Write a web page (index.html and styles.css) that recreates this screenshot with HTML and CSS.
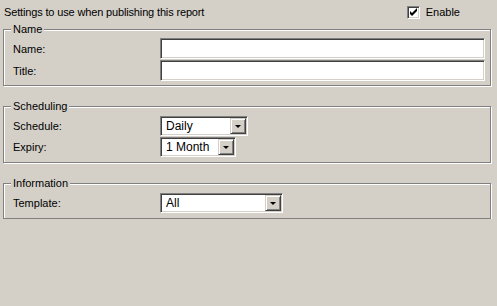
FILE: index.html
```html
<!DOCTYPE html>
<html>
<head>
<meta charset="utf-8">
<link rel="stylesheet" href="styles.css">
</head>
<body>
<div class="page">
  <div class="header">
    <span class="title">Settings to use when publishing this report</span>
    <label class="enable">
      <span class="check"><svg width="9" height="9" viewBox="0 0 9 9"><path d="M1 3v3l2 2 5-5V0L3 5z" fill="#000"/></svg></span>
      <span>Enable</span>
    </label>
  </div>

  <div class="group g-name">
    <span class="legend">Name</span>
    <div class="row"><span class="lbl">Name:</span><div class="edit"></div></div>
    <div class="row"><span class="lbl">Title:</span><div class="edit"></div></div>
  </div>

  <div class="group g-sched">
    <span class="legend">Scheduling</span>
    <div class="row"><span class="lbl">Schedule:</span><div class="combo w-daily"><span class="val">Daily</span><span class="btn"><span class="arrow"></span></span></div></div>
    <div class="row"><span class="lbl">Expiry:</span><div class="combo w-month"><span class="val">1 Month</span><span class="btn"><span class="arrow"></span></span></div></div>
  </div>

  <div class="group g-info">
    <span class="legend">Information</span>
    <div class="row"><span class="lbl">Template:</span><div class="combo w-all"><span class="val">All</span><span class="btn"><span class="arrow"></span></span></div></div>
  </div>
</div>
</body>
</html>
```

FILE: styles.css
```css
html, body {
  margin: 0;
  padding: 0;
  background: #d4d0c8;
}
body {
  font-family: "Liberation Sans", Arial, sans-serif;
  font-size: 11px;
  color: #000;
}
.page {
  display: flex;
  flex-direction: column;
  padding: 0 6px 0 3px;
}
.header {
  height: 22px;
  display: flex;
  align-items: center;
  justify-content: space-between;
  padding-left: 1px;
  margin-top: 1px;
  margin-bottom: 6px;
}
.title { letter-spacing: -0.15px; }
.enable {
  display: flex;
  align-items: center;
  gap: 6px;
  margin-right: 31px;
}
.check {
  width: 9px;
  height: 9px;
  background: #fff;
  border-style: solid;
  border-width: 1px;
  border-color: #808080 #fff #fff #808080;
  box-shadow: inset 1px 1px 0 #404040, inset -1px -1px 0 #d4d0c8;
  padding: 1px;
  display: flex;
}
.check svg { display: block; }
.group {
  position: relative;
  border: 1px solid #808080;
  box-shadow: inset 1px 1px 0 #fff, 1px 1px 0 #fff;
  display: flex;
  flex-direction: column;
  padding: 0 5px 0 9px;
}
.legend {
  position: absolute;
  top: -7px;
  left: 7px;
  padding: 0 2px 0 2px;
  background: #d4d0c8;
  line-height: 13px;
}
.g-name { padding-top: 8px; padding-bottom: 4px; gap: 1px; margin-bottom: 20px; }
.g-sched { padding-top: 9px; padding-bottom: 5px; gap: 1px; margin-bottom: 20px; }
.g-info { padding-top: 9px; padding-bottom: 5px; }
.row {
  display: flex;
  align-items: center;
}
.lbl {
  width: 147px;
  flex: none;
}
.edit {
  flex: 1;
  height: 17px;
  background: #fff;
  border-style: solid;
  border-width: 1px;
  border-color: #808080 #fff #fff #808080;
  box-shadow: inset 1px 1px 0 #404040, inset -1px -1px 0 #d4d0c8;
  padding: 1px;
}
.combo {
  height: 16px;
  background: #fff;
  border-style: solid;
  border-width: 1px;
  border-color: #808080 #fff #fff #808080;
  box-shadow: inset 1px 1px 0 #404040, inset -1px -1px 0 #d4d0c8;
  padding: 1px;
  display: flex;
  align-items: stretch;
  justify-content: space-between;
  box-sizing: content-box;
}
.w-daily { width: 84px; }
.w-month { width: 72px; }
.w-all { width: 119px; }
.val {
  display: flex;
  align-items: center;
  padding-left: 4px;
  font-size: 12px;
}
.btn {
  width: 14px;
  background: #d4d0c8;
  border-style: solid;
  border-width: 1px;
  border-color: #d4d0c8 #404040 #404040 #d4d0c8;
  box-shadow: inset 1px 1px 0 #fff, inset -1px -1px 0 #808080;
  display: flex;
  align-items: center;
  justify-content: center;
}
.arrow {
  width: 0;
  height: 0;
  border-left: 3px solid transparent;
  border-right: 3px solid transparent;
  border-top: 3px solid #000;
  margin-top: 1px;
}
```
